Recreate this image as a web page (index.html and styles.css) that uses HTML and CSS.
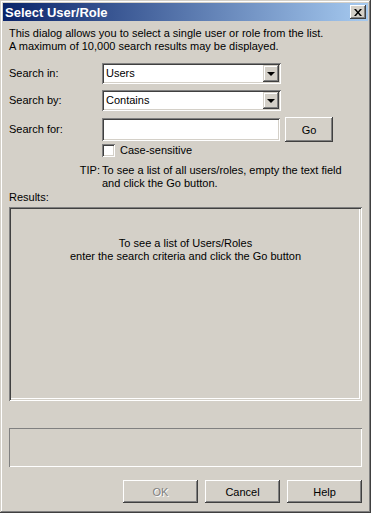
FILE: index.html
```html
<!DOCTYPE html>
<html lang="en">
<head>
    <meta charset="UTF-8">
    <title>Select User/Role</title>
    <link rel="stylesheet" href="styles.css">
</head>
<body>
    <div class="window">
        <div class="titlebar">
            <span class="title">Select User/Role</span>
            <button class="close" title="Close">
                <svg width="8" height="7" viewBox="0 0 8 7"><path d="M0 0h2l2 2.5L6 0h2L5 3.5 8 7H6L4 4.5 2 7H0l3-3.5z" fill="#000"/></svg>
            </button>
        </div>
        <div class="body">
            <p class="intro">This dialog allows you to select a single user or role from the list.<br>A maximum of 10,000 search results may be displayed.</p>

            <div class="row">
                <label class="label">Search in:</label>
                <div class="combo"><span class="value">Users</span><span class="drop"></span></div>
            </div>
            <div class="row">
                <label class="label">Search by:</label>
                <div class="combo"><span class="value">Contains</span><span class="drop"></span></div>
            </div>
            <div class="row row-search">
                <label class="label">Search for:</label>
                <div class="field"></div>
                <button class="btn go">Go</button>
            </div>
            <div class="check-row">
                <span class="checkbox"></span>
                <span>Case-sensitive</span>
            </div>
            <div class="tip-row">
                <span class="tip-label">TIP:</span>
                <p class="tip">To see a list of all users/roles, empty the text field<br>and click the Go button.</p>
            </div>

            <div class="results-label">Results:</div>
            <div class="results">
                <p>To see a list of Users/Roles<br>enter the search criteria and click the Go button</p>
            </div>

            <div class="status"></div>

            <div class="buttons">
                <button class="btn" disabled>OK</button>
                <button class="btn">Cancel</button>
                <button class="btn">Help</button>
            </div>
        </div>
    </div>
</body>
</html>
```

FILE: styles.css
```css
body {
    margin: 0;
    padding: 0;
    font-family: "Liberation Sans", Arial, sans-serif;
    font-size: 11px;
    color: #000;
    background: #d4d0c8;
}
p {
    margin: 0;
}
.window {
    width: 371px;
    height: 513px;
    box-sizing: border-box;
    padding: 3px;
    background: #d4d0c8;
    box-shadow: inset -1px -1px #404040, inset 1px 1px #d4d0c8,
                inset -2px -2px #808080, inset 2px 2px #fff;
}
.titlebar {
    height: 18px;
    display: flex;
    align-items: center;
    justify-content: space-between;
    padding: 0 2px;
    background: linear-gradient(to right, #0a246a, #a6caf0);
}
.title {
    color: #fff;
    font-weight: bold;
    font-size: 13px;
}
.close {
    width: 16px;
    height: 14px;
    padding: 0;
    border: none;
    display: flex;
    align-items: center;
    justify-content: center;
    background: #d4d0c8;
    box-shadow: inset -1px -1px #404040, inset 1px 1px #fff,
                inset -2px -2px #808080;
}
.body {
    padding: 0 6px 7px 6px;
    line-height: 13px;
}
.intro {
    margin-top: 6px;
}
.row {
    display: flex;
    align-items: center;
    margin-top: 6px;
}
.row:first-of-type {
    margin-top: 10px;
}
.label {
    width: 93px;
}
.combo {
    width: 179px;
    height: 21px;
    box-sizing: border-box;
    padding: 2px 2px 2px 4px;
    display: flex;
    align-items: center;
    justify-content: space-between;
    background: #fff;
    box-shadow: inset 1px 1px #808080, inset -1px -1px #fff,
                inset 2px 2px #404040, inset -2px -2px #d4d0c8;
}
.drop {
    width: 16px;
    height: 17px;
    box-sizing: border-box;
    display: flex;
    align-items: center;
    justify-content: center;
    background: #d4d0c8;
    box-shadow: inset -1px -1px #404040, inset 1px 1px #d4d0c8,
                inset -2px -2px #808080, inset 2px 2px #fff;
}
.drop::after {
    content: "";
    border-left: 4px solid transparent;
    border-right: 4px solid transparent;
    border-top: 4px solid #000;
    margin-top: 1px;
}
.row-search {
    height: 25px;
}
.field {
    width: 178px;
    height: 23px;
    box-sizing: border-box;
    background: #fff;
    box-shadow: inset 1px 1px #808080, inset -1px -1px #fff,
                inset 2px 2px #404040, inset -2px -2px #d4d0c8;
}
.btn {
    width: 75px;
    height: 23px;
    padding: 0;
    border: none;
    font-family: inherit;
    font-size: 11px;
    color: #000;
    background: #d4d0c8;
    box-shadow: inset -1px -1px #404040, inset 1px 1px #fff,
                inset -2px -2px #808080;
}
.btn:disabled {
    color: #808080;
    text-shadow: 1px 1px #fff;
}
.go {
    width: 48px;
    height: 25px;
    margin-left: 5px;
}
.check-row {
    display: flex;
    align-items: center;
    gap: 5px;
    margin: 2px 0 0 93px;
    height: 13px;
}
.checkbox {
    width: 13px;
    height: 13px;
    box-sizing: border-box;
    background: #fff;
    box-shadow: inset 1px 1px #808080, inset -1px -1px #fff,
                inset 2px 2px #404040, inset -2px -2px #d4d0c8;
}
.tip-row {
    display: flex;
    margin-top: 7px;
}
.tip-label {
    width: 93px;
    box-sizing: border-box;
    padding-right: 2px;
    text-align: right;
}
.results-label {
    margin-top: 1px;
}
.results {
    margin-top: 3px;
    height: 194px;
    box-sizing: border-box;
    padding-top: 30px;
    text-align: center;
    box-shadow: inset 1px 1px #808080, inset -1px -1px #fff,
                inset 2px 2px #404040, inset -2px -2px #d4d0c8,
                inset -3px -3px #fff;
}
.status {
    margin-top: 27px;
    height: 39px;
    box-shadow: inset 1px 1px #808080, inset -1px -1px #fff;
}
.buttons {
    display: flex;
    justify-content: flex-end;
    gap: 7px;
    margin-top: 13px;
}
```
